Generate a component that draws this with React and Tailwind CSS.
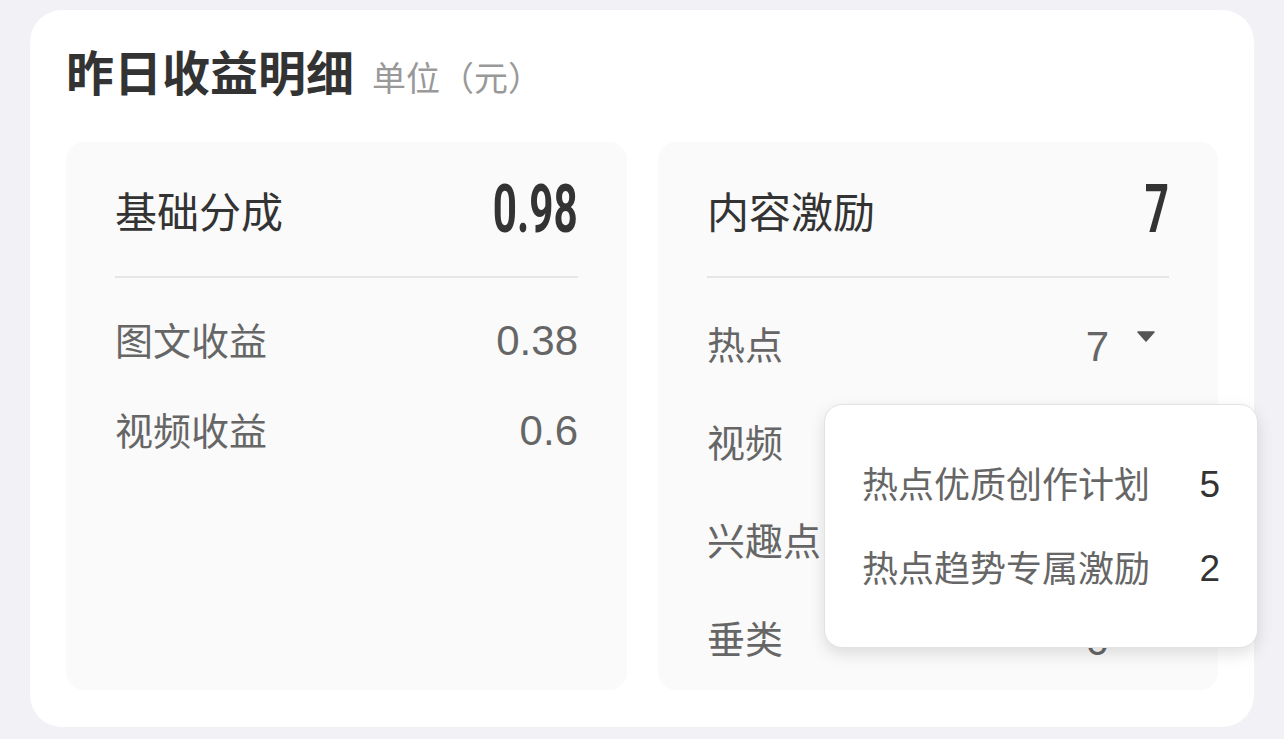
import React from "react";

const cjk = { fontFamily: '"Noto Sans CJK SC", "Noto Sans", sans-serif' };
const num = { fontFamily: 'Roboto, "Liberation Sans", sans-serif' };
const thin = { fontFamily: '"Liberation Sans", Roboto, sans-serif' };

function Caret() {
  return (
    <svg width="18" height="11" viewBox="0 0 18 11" className="text-[#555]">
      <path d="M1 1 H17 L9 10 Z" fill="currentColor" strokeLinejoin="round" stroke="currentColor" strokeWidth="1.5" />
    </svg>
  );
}

function PanelHeader({ label, value }) {
  return (
    <div className="flex items-center justify-between h-[56px]">
      <span className="text-[42px] text-[#333] leading-none" style={cjk}>
        {label}
      </span>
      <span
        className="text-[66px] font-bold text-[#333] leading-none scale-x-[0.64] origin-right"
        style={num}
      >
        {value}
      </span>
    </div>
  );
}

export default function App() {
  const leftRows = [
    ["图文收益", "0.38"],
    ["视频收益", "0.6"],
  ];
  const rightRows = [
    ["热点", "7", true],
    ["视频", "0"],
    ["兴趣点", "0"],
    ["垂类", "0"],
  ];

  return (
    <div className="w-full h-[739px] bg-[#f1f1f6] px-[30px] pt-[10px] overflow-hidden">
      <div className="bg-white rounded-[32px] px-[36px] pb-[37px] relative">
        <div className="flex items-baseline gap-[18px] pt-[32px] h-[93px]" style={cjk}>
          <h1 className="text-[48px] font-bold text-[#333] leading-[56px]">昨日收益明细</h1>
          <span className="text-[34px] text-[#999]">单位（元）</span>
        </div>

        <div className="grid grid-cols-[561px_560px] gap-[31px] mt-[39px]">
          {/* 基础分成 */}
          <div className="bg-[#fafafa] rounded-[18px] h-[548px] px-[49px] pt-[40px]">
            <PanelHeader label="基础分成" value="0.98" />
            <div className="h-[2px] bg-[#e6e6e6] mt-[38px]" />
            <div className="pt-[16px]">
              {leftRows.map(([label, value]) => (
                <div key={label} className="flex items-center justify-between h-[90px]">
                  <span className="text-[38px] text-[#666] leading-none" style={cjk}>
                    {label}
                  </span>
                  <span className="text-[42px] text-[#666] leading-none mt-[4px]" style={thin}>
                    {value}
                  </span>
                </div>
              ))}
            </div>
          </div>

          {/* 内容激励 */}
          <div className="bg-[#fafafa] rounded-[18px] h-[548px] px-[49px] pt-[40px] relative">
            <PanelHeader label="内容激励" value="7" />
            <div className="h-[2px] bg-[#e6e6e6] mt-[38px]" />
            <div className="pt-[16px]">
              {rightRows.map(([label, value, open]) => (
                <div key={label} className="flex items-center h-[98px]">
                  <span className="flex-1 text-[38px] text-[#666] leading-none" style={cjk}>
                    {label}
                  </span>
                  <span className="text-[42px] text-[#666] leading-none mt-[8px]" style={thin}>
                    {value}
                  </span>
                  <span className="w-[60px] flex justify-end pr-[14px] -mt-[14px]">
                    {open && <Caret />}
                  </span>
                </div>
              ))}
            </div>

            <div className="absolute left-[166px] top-[262px] w-[434px] h-[244px] bg-white rounded-[18px] border border-[#e2e2e2] shadow-[0_6px_16px_rgba(0,0,0,0.12)] px-[37px] pt-[35px] pb-[41px] z-10">
              {[
                ["热点优质创作计划", "5"],
                ["热点趋势专属激励", "2"],
              ].map(([label, value]) => (
                <div key={label} className="flex items-center justify-between h-[84px]">
                  <span className="text-[36px] text-[#666] leading-none" style={cjk}>
                    {label}
                  </span>
                  <span className="text-[37px] text-[#333] leading-none mt-[4px]" style={thin}>
                    {value}
                  </span>
                </div>
              ))}
            </div>
          </div>
        </div>
      </div>
    </div>
  );
}
